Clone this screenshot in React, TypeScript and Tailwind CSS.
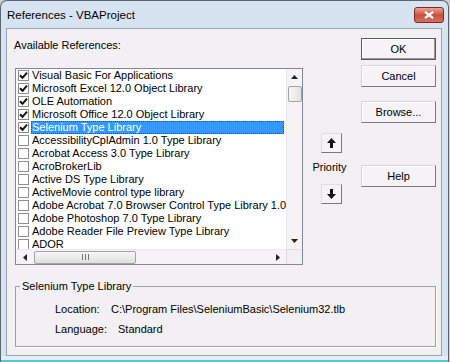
import React from "react";

type Ref = { name: string; checked?: boolean; selected?: boolean };

const refs: Ref[] = [
  { name: "Visual Basic For Applications", checked: true },
  { name: "Microsoft Excel 12.0 Object Library", checked: true },
  { name: "OLE Automation", checked: true },
  { name: "Microsoft Office 12.0 Object Library", checked: true },
  { name: "Selenium Type Library", checked: true, selected: true },
  { name: "AccessibilityCplAdmin 1.0 Type Library" },
  { name: "Acrobat Access 3.0 Type Library" },
  { name: "AcroBrokerLib" },
  { name: "Active DS Type Library" },
  { name: "ActiveMovie control type library" },
  { name: "Adobe Acrobat 7.0 Browser Control Type Library 1.0" },
  { name: "Adobe Photoshop 7.0 Type Library" },
  { name: "Adobe Reader File Preview Type Library" },
  { name: "ADOR" },
];

const font = { fontFamily: '"Liberation Sans", Arial, sans-serif' };

function Check({ on }: { on?: boolean }) {
  return (
    <div className="w-[11px] h-[11px] shrink-0 border border-[#8f8f8f] bg-white flex items-center justify-center">
      {on && (
        <svg width="9" height="9" viewBox="0 0 9 9">
          <path d="M1 4.3 L3.5 6.8 L8 1.6" stroke="#111" strokeWidth="2" fill="none" />
        </svg>
      )}
    </div>
  );
}

// small black triangle used by scroll arrows
function Tri({ dir }: { dir: "up" | "down" | "left" | "right" }) {
  const d = {
    up: "M0 4 L3.5 0 L7 4 Z",
    down: "M0 0 L3.5 4 L7 0 Z",
    left: "M4 0 L0 3.5 L4 7 Z",
    right: "M0 0 L4 3.5 L0 7 Z",
  }[dir];
  const horiz = dir === "up" || dir === "down";
  return (
    <svg width={horiz ? 7 : 4} height={horiz ? 4 : 7} viewBox={horiz ? "0 0 7 4" : "0 0 4 7"}>
      <path d={d} fill="#222" />
    </svg>
  );
}

function Button({ label, isDefault }: { label: string; isDefault?: boolean }) {
  return (
    <div
      className={`h-[22px] w-[75px] flex items-center justify-center text-[11px] text-black bg-[#f6f3f6] border ${
        isDefault
          ? "border-[#5b5b5b] shadow-[inset_-1px_-1px_0_#9a9a9a,inset_1px_1px_0_#ffffff]"
          : "border-t-[#d8d5d8] border-l-[#d8d5d8] border-r-[#7a7a7a] border-b-[#7a7a7a] shadow-[inset_1px_1px_0_#ffffff]"
      }`}
    >
      {label}
    </div>
  );
}

function ArrowButton({ down }: { down?: boolean }) {
  return (
    <div className="w-[21px] h-[20px] flex items-center justify-center bg-[#f6f3f6] border border-t-[#e0dde0] border-l-[#e0dde0] border-r-[#7a7a7a] border-b-[#7a7a7a]">
      <svg width="9" height="10" viewBox="0 0 9 10" className={down ? "rotate-180" : ""}>
        <path d="M4.5 0 L9 5 L6 5 L6 10 L3 10 L3 5 L0 5 Z" fill="#111" />
      </svg>
    </div>
  );
}

export default function App() {
  return (
    <div className="w-[450px] h-[362px] bg-[#c9ced4] overflow-hidden" style={font}>
      <div className="w-[449px] h-[362px] flex flex-col rounded-t-[7px] border border-b-0 border-[#5d6670] bg-[#d6e4f2]">
        {/* Title bar */}
        <div className="h-[27px] shrink-0 flex items-center justify-between pl-[6px] pr-[4px]">
          <span className="text-[11.5px] text-black mt-[2px]">References - VBAProject</span>
          <div className="w-[30px] h-[16px] mt-[1px] rounded-[3px] border border-[#7a2b22] bg-gradient-to-b from-[#e9a596] via-[#c9503f] to-[#d2705e] flex items-center justify-center">
            <svg width="10" height="8" viewBox="0 0 10 8">
              <path d="M1 0.8 L9 7.2 M9 0.8 L1 7.2" stroke="#fff" strokeWidth="2.2" />
            </svg>
          </div>
        </div>

        {/* Dialog body */}
        <div className="flex-1 ml-[5px] mr-[6px] border border-[#98a4b0] bg-[#f3f0f3] pl-[8px] flex flex-col">
          <div className="flex">
            {/* references list */}
            <div className="w-[288px] flex flex-col">
              <div className="mt-[9px] h-[14px] leading-[14px] text-[11px] text-black -ml-[1px]">
                Available References:
              </div>
              <div className="mt-[16px] h-[197px] border border-[#828790] bg-white flex flex-col">
                <div className="flex flex-1 min-h-0">
                  <div className="flex-1 overflow-hidden">
                    {refs.map((r) => (
                      <div key={r.name} className="h-[13px] flex items-center pl-[2px]">
                        <Check on={r.checked} />
                        <div
                          className={`ml-[2px] h-[13px] leading-[13px] pl-[1px] pr-[2px] text-[11px] whitespace-nowrap ${
                            r.selected
                              ? "w-[253px] bg-[#3399ff] text-white outline outline-1 outline-dotted outline-[#1a4f8a] -outline-offset-1"
                              : "text-black"
                          }`}
                        >
                          {r.name}
                        </div>
                      </div>
                    ))}
                  </div>
                  {/* vertical scrollbar */}
                  <div className="w-[16px] bg-[#f5f3f5] border-l border-[#ebe9eb] flex flex-col items-center">
                    <div className="h-[16px] flex items-center justify-center">
                      <Tri dir="up" />
                    </div>
                    <div className="mt-[1px] w-[14px] h-[16px] rounded-[2px] border border-[#a3a3a3] bg-gradient-to-r from-[#f7f7f7] to-[#e2e2e2]" />
                    <div className="flex-1" />
                    <div className="h-[16px] flex items-center justify-center">
                      <Tri dir="down" />
                    </div>
                  </div>
                </div>
                {/* horizontal scrollbar */}
                <div className="h-[15px] flex">
                  <div className="flex-1 bg-[#f5f3f5] border-t border-[#ebe9eb] flex items-center">
                    <div className="w-[17px] flex items-center justify-center">
                      <Tri dir="left" />
                    </div>
                    <div className="ml-[1px] w-[102px] h-[13px] rounded-[2px] border border-[#a3a3a3] bg-gradient-to-b from-[#f7f7f7] to-[#dedede] flex items-center justify-center gap-[2px]">
                      <div className="w-[1px] h-[6px] bg-[#777]" />
                      <div className="w-[1px] h-[6px] bg-[#777]" />
                      <div className="w-[1px] h-[6px] bg-[#777]" />
                    </div>
                    <div className="flex-1" />
                    <div className="w-[17px] flex items-center justify-center">
                      <Tri dir="right" />
                    </div>
                  </div>
                  <div className="w-[16px] bg-[#f3f0f3] border-t border-l border-[#e0dde0]" />
                </div>
              </div>
            </div>

            {/* priority */}
            <div className="ml-[18px] w-[21px] flex flex-col items-center">
              <div className="mt-[104px]">
                <ArrowButton />
              </div>
              <div className="mt-[7px] -ml-[4px] h-[14px] leading-[14px] text-[11px] text-black whitespace-nowrap">
                Priority
              </div>
              <div className="mt-[10px]">
                <ArrowButton down />
              </div>
            </div>

            {/* buttons */}
            <div className="ml-[19px] flex flex-col">
              <div className="mt-[9px]">
                <Button label="OK" isDefault />
              </div>
              <div className="mt-[5px]">
                <Button label="Cancel" />
              </div>
              <div className="mt-[14px]">
                <Button label="Browse..." />
              </div>
              <div className="mt-[42px]">
                <Button label="Help" />
              </div>
            </div>
          </div>

          {/* details */}
          <fieldset className="mt-[14px] w-[421px] border border-[#a0a0a0] shadow-[1px_1px_0_#ffffff] pb-[10px]">
            <legend className="ml-[4px] px-[2px] h-[14px] leading-[14px] text-[11px] text-black">
              Selenium Type Library
            </legend>
            <div className="mt-[9px] pl-[39px] text-[11px] text-black">
              <div className="flex h-[14px] leading-[14px]">
                <span className="w-[56px]">Location:</span>
                <span>C:\Program Files\SeleniumBasic\Selenium32.tlb</span>
              </div>
              <div className="flex h-[14px] leading-[14px] mt-[6px]">
                <span className="w-[63px]">Language:</span>
                <span>Standard</span>
              </div>
            </div>
          </fieldset>
        </div>
        <div className="h-[6px] shrink-0 border-b-[2px] border-[#5ec3d3] bg-[#e3eff7]" />
      </div>
    </div>
  );
}
